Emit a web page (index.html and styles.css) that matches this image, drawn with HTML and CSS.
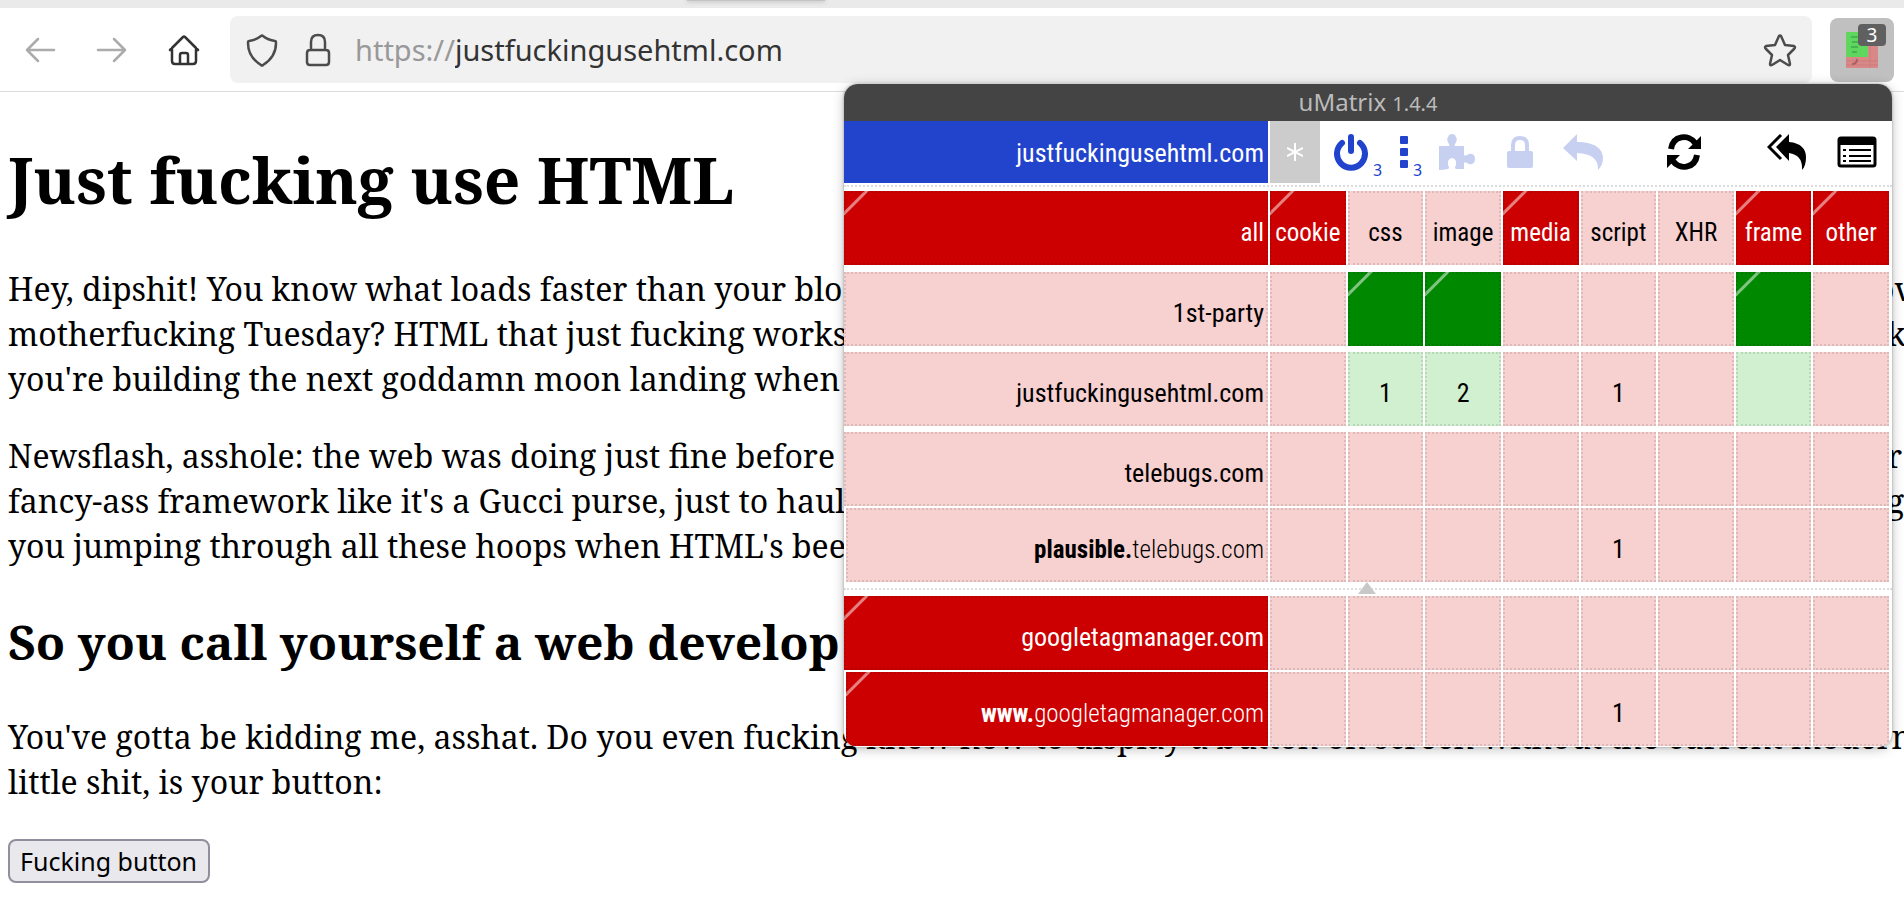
FILE: index.html
```html
<!DOCTYPE html>
<html lang="en">
<head>
    <meta charset="UTF-8">
    <meta name="viewport" content="width=device-width, initial-scale=1.0">
    <title>Just fucking use HTML</title>
    <link rel="stylesheet" href="styles.css">
</head>
<body>
    <div class="tabstrip"><div class="tab"></div></div>
    <header class="navbar">
        <button class="nav-btn dim" aria-label="Back">
            <svg width="32" height="32" viewBox="0 0 32 32"><path d="M30 16H3M14 5L3 16l11 11"/></svg>
        </button>
        <button class="nav-btn dim" aria-label="Forward">
            <svg width="32" height="32" viewBox="0 0 32 32"><path d="M2 16h27M18 5l11 11-11 11"/></svg>
        </button>
        <button class="nav-btn" aria-label="Home">
            <svg width="32" height="32" viewBox="0 0 32 32"><path d="M2 16L15 3q1-1 2 0l13 13M4 14v13q0 3 3 3h18q3 0 3-3V14M12 30V21q0-2 2-2h4q2 0 2 2v9"/></svg>
        </button>
        <div class="urlbar">
            <button class="url-icon" aria-label="Tracking protection">
                <svg width="32" height="34" viewBox="0 0 32 34"><path d="M15 3q1-1 2 0 5 4 12 5 1 0 1 2 0 14-13 22-1 1-2 0Q2 24 2 10q0-2 1-2 7-1 12-5z"/></svg>
            </button>
            <button class="url-icon" aria-label="Site security">
                <svg width="26" height="34" viewBox="0 0 26 34"><path d="M6 16V9q0-7 7-7t7 7v7M5 17h16q3 0 3 3v9q0 3-3 3H5q-3 0-3-3V20q0-3 3-3z"/></svg>
            </button>
            <label class="scheme" for="url">https://</label>
            <input class="url" id="url" type="text" value="justfuckingusehtml.com">
            <button class="url-icon" aria-label="Bookmark">
                <svg width="34" height="34" viewBox="0 0 34 34"><path d="M16 3q1-1 2 0l4 9 9 1q2 1 0 3l-6 6 2 9q0 2-2 1l-8-5-8 5q-2 1-2-1l2-9-6-6q-2-2 0-3l9-1z"/></svg>
            </button>
        </div>
        <button class="ext" aria-label="uMatrix">
            <svg width="32" height="36" viewBox="0 0 32 36">
                <rect width="32" height="36" fill="#d98888"/>
                <path d="M0 29h32M0 33h32M24 14v22" stroke="#cc7c7c" stroke-width="1"/>
                <rect width="22" height="25" fill="#5fd75f"/>
                <path d="M5 5h7M6 10h6M5 15h7M6 20h5" stroke="#46b450" stroke-width="2"/>
                <path d="M6 32q5 0 5-5" stroke="#a86060" stroke-width="2" fill="none"/>
            </svg>
            <span class="ext-count">3</span>
        </button>
    </header>

    <main class="page">
        <h1>Just fucking use HTML</h1>
        <p>
            <span class="line"><span>Hey, dipshit! You know what loads faster than your blo</span><span class="tail wide">ov</span></span>
            <span class="line"><span>motherfucking Tuesday? HTML that just fucking works.</span><span class="tail">k</span></span>
            <span class="line"><span>you're building the next goddamn moon landing when</span></span>
        </p>
        <p>
            <span class="line"><span>Newsflash, asshole: the web was doing just fine before</span><span class="tail">r</span></span>
            <span class="line"><span>fancy-ass framework like it's a Gucci purse, just to haul</span><span class="tail">g</span></span>
            <span class="line"><span>you jumping through all these hoops when HTML's been</span></span>
        </p>
        <h2>So you call yourself a web develop</h2>
        <p>
            <span class="line">You've gotta be kidding me, asshat. Do you even fucking know how to display a button on screen without the current modern</span>
            <span class="line">little shit, is your button:</span>
        </p>
        <button class="page-btn">Fucking button</button>
    </main>

    <section class="popup">
        <div class="title">uMatrix <small>1.4.4</small></div>
        <div class="tools">
            <button class="scope">justfuckingusehtml.com</button>
            <button class="star" aria-label="Global scope">
                <svg width="16" height="18" viewBox="0 0 16 18" fill="none" stroke="currentColor" stroke-width="2"><path d="M8 0v18M0 5l16 8M16 5L0 13"/></svg>
            </button>
            <button class="tool blue power" aria-label="Matrix filtering">
                <svg width="34" height="38" viewBox="0 0 34 38" fill="none" stroke="currentColor" stroke-width="6" stroke-linecap="round"><path d="M17 4v14M8 10a14 14 0 1 0 18 0"/></svg>
                <span class="count">3</span>
            </button>
            <button class="tool blue dots" aria-label="Switches">
                <svg width="8" height="32" viewBox="0 0 8 32" fill="currentColor"><rect width="8" height="8" rx="1"/><rect y="12" width="8" height="8" rx="1"/><rect y="24" width="8" height="8" rx="1"/></svg>
                <span class="count">3</span>
            </button>
            <button class="tool pale puzzle" aria-label="Recipes">
                <svg width="36" height="36" viewBox="0 0 36 36" fill="currentColor"><path d="M0 12h9q2 0 1-2-3-4-1-7 1-3 4-3t4 3q2 3-1 7-1 2 1 2h8v8q0 3 3 1 3-2 5-1 3 1 3 5t-3 5q-2 1-5-1-3-2-3 1v5h-8q-2-1 0-4 1-6-4-7-5 1-4 7 2 3 0 4-5 1-9 1z"/></svg>
            </button>
            <button class="tool pale lock" aria-label="Save">
                <svg width="26" height="32" viewBox="0 0 26 32"><path d="M6 16V9q0-7 7-7t7 7v7" fill="none" stroke="currentColor" stroke-width="4"/><rect y="15" width="26" height="17" rx="2" fill="currentColor"/></svg>
            </button>
            <button class="tool pale undo" aria-label="Undo">
                <svg width="40" height="36" viewBox="0 0 40 36" fill="currentColor"><path d="M14 0v8c18 0 26 7 26 16 0 5-2 9-5 12q1-16-21-17v8L0 14z"/></svg>
            </button>
            <button class="tool reload" aria-label="Reload">
                <svg width="34" height="36" viewBox="0 0 34 36" fill="none" stroke="currentColor" stroke-width="6"><path d="M4 15C6 1 22 0 28 9M30 21C28 35 12 36 6 27"/><path d="M34 2v13H21zM0 34V21h13z" fill="currentColor" stroke="none"/></svg>
            </button>
            <button class="tool revert" aria-label="Revert all">
                <svg width="40" height="36" viewBox="0 0 40 36" fill="currentColor"><path d="M22 0v8c12 1 17 7 17 15 0 5-1 10-4 13q1-15-13-17v8L9 13z"/><path d="M14 1L2 13l12 12" fill="none" stroke="currentColor" stroke-width="3"/></svg>
            </button>
            <button class="tool" aria-label="Logger">
                <svg width="40" height="32" viewBox="0 0 40 32"><rect x="2" y="2" width="36" height="28" rx="2" fill="#fff" stroke="currentColor" stroke-width="3"/><path d="M1 2h38v7H1z" fill="currentColor"/><path d="M6 14h3M12 14h22M6 20h3M12 20h22M6 25h3M12 25h22" stroke="currentColor" stroke-width="2"/></svg>
            </button>
        </div>
        <table class="matrix">
            <thead>
                <tr>
                    <th class="red mark">all</th>
                    <th class="red mark">cookie</th>
                    <th>css</th>
                    <th>image</th>
                    <th class="red mark">media</th>
                    <th>script</th>
                    <th>XHR</th>
                    <th class="red mark">frame</th>
                    <th class="red mark">other</th>
                </tr>
            </thead>
            <tbody>
                <tr><th>1st-party</th><td></td><td class="green mark"></td><td class="green mark"></td><td></td><td></td><td></td><td class="green mark"></td><td></td></tr>
                <tr><th>justfuckingusehtml.com</th><td></td><td class="mint">1</td><td class="mint">2</td><td></td><td>1</td><td></td><td class="mint"></td><td></td></tr>
                <tr><th>telebugs.com</th><td></td><td></td><td></td><td></td><td></td><td></td><td></td><td></td></tr>
                <tr class="sub"><th><b>plausible.</b><span class="thin">telebugs.com</span></th><td></td><td></td><td></td><td></td><td>1</td><td></td><td></td><td></td></tr>
            </tbody>
            <tbody class="blocked">
                <tr><th class="red mark">googletagmanager.com</th><td></td><td></td><td></td><td></td><td></td><td></td><td></td><td></td></tr>
                <tr class="sub"><th class="red mark"><b>www.</b><span class="thin">googletagmanager.com</span></th><td></td><td></td><td></td><td></td><td>1</td><td></td><td></td><td></td></tr>
            </tbody>
        </table>
    </section>
</body>
</html>
```
FILE: styles.css
```css
body {
    margin: 0;
    background: #fff;
    color: #000;
    overflow: hidden;
    position: relative;
}
button, input {
    font: inherit;
    color: inherit;
    border: none;
    background: none;
    padding: 0;
    margin: 0;
}
svg {
    display: block;
}

/* browser chrome */
.tabstrip {
    height: 8px;
    background: #eaeaea;
    overflow: hidden;
}
.tab {
    width: 138px;
    height: 1px;
    margin-left: 687px;
    background: #c4c4c4;
    box-shadow: 0 0 4px rgba(0, 0, 0, 0.5);
}
.navbar {
    display: flex;
    align-items: center;
    height: 83px;
    padding: 0 10px 0 4px;
    border-bottom: 1px solid #dcdcdc;
    font-family: "Noto Sans", sans-serif;
}
.nav-btn {
    display: flex;
    justify-content: center;
    width: 72px;
    color: #333;
}
.nav-btn svg, .url-icon svg {
    fill: none;
    stroke: currentColor;
    stroke-width: 2.5;
    stroke-linejoin: round;
    stroke-linecap: round;
}
.dim {
    color: #ababab;
}
.urlbar {
    flex: 1;
    display: flex;
    align-items: center;
    height: 67px;
    margin-left: 10px;
    padding: 0 15px 0 16px;
    background: #f1f1f1;
    border-radius: 8px;
    font-size: 29px;
    color: #333;
}
.url-icon {
    margin-right: 27px;
    color: #4c4c4c;
}
.url-icon:last-child {
    margin-right: 0;
}
.scheme {
    margin-left: -3px;
    color: #999;
}
.url {
    flex: 1;
    min-width: 0;
    outline: none;
}
.ext {
    position: relative;
    display: flex;
    justify-content: center;
    align-items: center;
    width: 64px;
    height: 64px;
    margin-left: 18px;
    background: #c0c0c0;
    border-radius: 8px;
}
.ext-count {
    position: absolute;
    top: 6px;
    right: 8px;
    width: 28px;
    background: #606060;
    border-radius: 4px;
    color: #fff;
    font-size: 19px;
    line-height: 22px;
}

/* page */
.page {
    padding-left: 8px;
    font-family: "Noto Serif", "DejaVu Serif Condensed", "DejaVu Serif", serif;
    font-size: 32px;
    line-height: 45px;
}
h1 {
    margin: 44px 0 42px;
    font-size: 64px;
    line-height: 88px;
}
h2 {
    margin: 41px 0 39px;
    font-size: 48px;
    line-height: 66px;
}
p {
    margin: 32px 0;
}
.line {
    display: flex;
    justify-content: space-between;
    white-space: nowrap;
}
.tail {
    width: 17px;
}
.wide {
    width: 28px;
}
.page-btn {
    height: 44px;
    padding: 0 11px 0 10px;
    background: #e9e8ed;
    border: 2px solid #8f8f9d;
    border-radius: 8px;
    font-family: "Noto Sans", sans-serif;
    font-size: 25px;
    line-height: 36px;
}

/* popup */
.popup {
    position: absolute;
    top: 84px;
    right: 12px;
    width: 1048px;
    background: #fff;
    border-radius: 14px;
    overflow: hidden;
    box-shadow: 0 0 3px rgba(0, 0, 0, 0.3), 0 2px 12px rgba(0, 0, 0, 0.25);
    font-family: "Roboto Condensed", Roboto, sans-serif;
    font-size: 26px;
}
.title {
    height: 37px;
    background: #444;
    color: #bbb;
    font-family: "Noto Sans", sans-serif;
    font-size: 24px;
    line-height: 36px;
    text-align: center;
}
.title small {
    font-size: 20px;
}
.tools {
    display: flex;
    align-items: center;
    height: 62px;
    padding-right: 15px;
    padding-bottom: 2px;
    border-bottom: 2px dotted #ddd;
}
.scope {
    width: 424px;
    height: 62px;
    padding: 2px 4px 0;
    background: #2244cc;
    color: #fff;
    text-align: right;
}
.star {
    display: flex;
    align-items: center;
    justify-content: center;
    width: 50px;
    height: 62px;
    margin: 0 14px 0 2px;
    background: #ccc;
    color: #fff;
}
.tool {
    position: relative;
}
.blue {
    color: #2244cc;
}
.pale {
    color: #c8d0f2;
}
.count {
    position: absolute;
    left: 100%;
    bottom: -10px;
    margin-left: 5px;
    font-family: "Noto Sans", sans-serif;
    font-size: 16px;
}
.power {
    margin-right: 32px;
}
.dots {
    margin-right: 31px;
}
.dots .count {
    bottom: -13px;
}
.puzzle {
    margin-right: 32px;
}
.lock {
    margin-right: 30px;
}
.undo {
    margin-right: auto;
}
.reload {
    margin-right: 66px;
}
.revert {
    margin-right: 30px;
}

.matrix {
    display: block;
    padding-top: 4px;
}
.matrix thead, .matrix tbody {
    display: block;
}
.matrix tr {
    display: grid;
    grid-template-columns: 424px repeat(8, 1fr);
    gap: 2px;
    height: 74px;
    margin: 0 3px 6px 0;
}
.matrix thead tr {
    margin-bottom: 7px;
    font-size: 25px;
}
.matrix th, .matrix td {
    display: flex;
    align-items: center;
    justify-content: center;
    padding: 8px 0 0;
    border: 2px dotted rgba(0, 0, 0, 0.1);
    background-color: #f7d0d0;
    background-origin: border-box;
    background-repeat: no-repeat;
    font-weight: 400;
}
.matrix th:first-child {
    justify-content: flex-end;
    padding-right: 2px;
}
.matrix .sub {
    margin-top: -4px;
}
.matrix .sub th {
    margin-left: 2px;
    font-size: 25px;
}
.matrix .red {
    background-color: #cc0000;
    color: #fff;
}
.matrix .green {
    background-color: #008800;
}
.matrix .mint {
    background-color: #d0f0d0;
}
.mark {
    background-image: linear-gradient(135deg, transparent 14px, rgba(255, 255, 255, 0.5) 15px, rgba(255, 255, 255, 0.5) 17px, transparent 18px);
    background-size: 26px 26px;
}
.matrix b {
    font-weight: 700;
}
.thin {
    font-weight: 300;
}
.matrix .blocked {
    position: relative;
    padding-top: 6px;
    border-top: 2px dotted #ddd;
}
.blocked::before {
    content: "";
    position: absolute;
    top: -8px;
    left: 50%;
    margin-left: -10px;
    border: 9px solid transparent;
    border-top: none;
    border-bottom: 12px solid #c8c8c8;
}
.blocked tr:last-child {
    margin-bottom: 1px;
}
```
